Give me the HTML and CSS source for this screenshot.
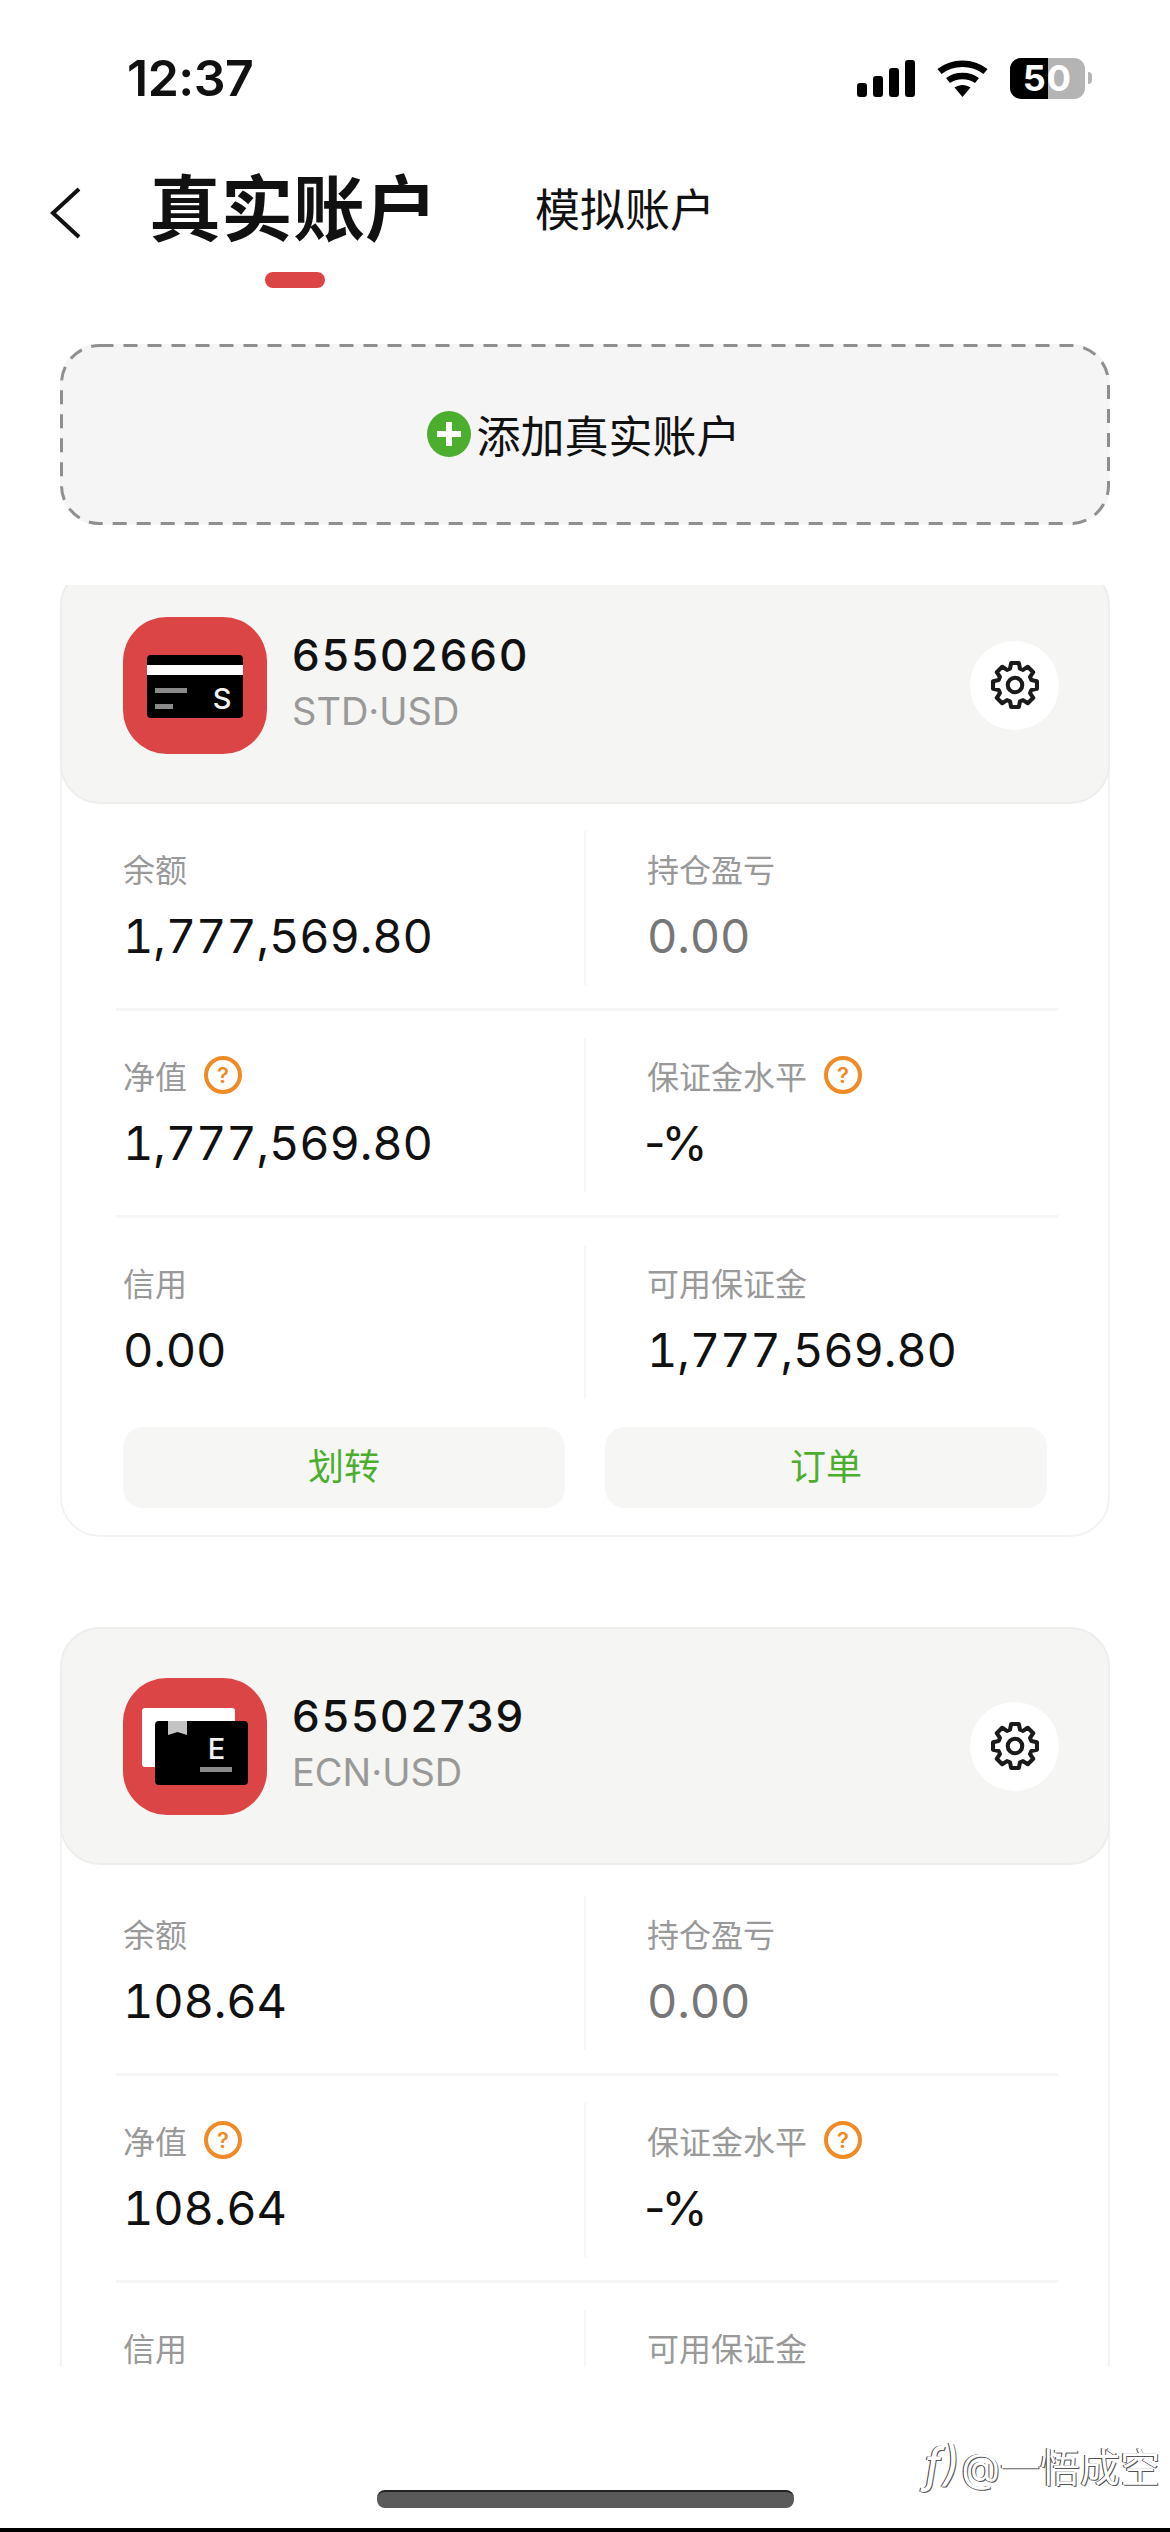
FILE: index.html
```html
<!DOCTYPE html>
<html lang="zh-CN">
<head>
  <meta charset="UTF-8" />
  <meta name="viewport" content="width=device-width, initial-scale=1" />
  <title>真实账户</title>
  <link rel="stylesheet" href="styles.css">
</head>
<body>
  <svg class="defs" width="0" height="0">
    <symbol id="gear" viewBox="-14 -14 28 28">
      <path d="M11.82 -2.08L11.82 2.08L8.8 2.69L8.12 4.32L9.83 6.88L6.88 9.83L4.32 8.12L2.69 8.8L2.08 11.82L-2.08 11.82L-2.69 8.8L-4.32 8.12L-6.88 9.83L-9.83 6.88L-8.12 4.32L-8.8 2.69L-11.82 2.08L-11.82 -2.08L-8.8 -2.69L-8.12 -4.32L-9.83 -6.88L-6.88 -9.83L-4.32 -8.12L-2.69 -8.8L-2.08 -11.82L2.08 -11.82L2.69 -8.8L4.32 -8.12L6.88 -9.83L9.83 -6.88L8.12 -4.32L8.8 -2.69Z" fill="none" stroke="#1a1a1a" stroke-width="2.2" stroke-linejoin="round"/>
      <circle r="3.9" fill="none" stroke="#1a1a1a" stroke-width="2.2"/>
    </symbol>
  </svg>

  <!-- Status bar -->
  <div class="status-bar">
    <span class="time">12:37</span>
    <div class="status-icons">
      <div class="signal">
        <i class="bar1"></i><i class="bar2"></i><i class="bar3"></i><i class="bar4"></i>
      </div>
      <svg class="wifi" width="51" height="37" viewBox="0 0 51 37">
        <path d="M2.5 11.5C15.5 1 35.5 1 48.5 11.5" fill="none" stroke="#000" stroke-width="6.5"/>
        <path d="M11 20.5C19 14.5 32 14.5 40 20.5" fill="none" stroke="#000" stroke-width="6.5"/>
        <path d="M17.5 27.5C22.5 24 28.5 24 33.5 27.5L25.5 37Z" fill="#000"/>
      </svg>
      <div class="battery"><span>50</span></div>
      <i class="battery-nub"></i>
    </div>
  </div>

  <!-- Tabs -->
  <div class="nav">
    <svg class="back" width="32" height="52" viewBox="0 0 32 52">
      <polyline points="29,2 3,26 29,50" fill="none" stroke="#111" stroke-width="4"/>
    </svg>
    <div class="tab-active">
      <div class="tab-title">真实账户</div>
      <div class="tab-line"></div>
    </div>
    <div class="tab">模拟账户</div>
  </div>

  <!-- Add account -->
  <div class="add-box">
    <svg class="add-dash" width="1050" height="181" viewBox="0 0 1050 181">
      <rect x="1.5" y="1.5" width="1047" height="178" rx="38" fill="none" stroke="#8f8f8f" stroke-width="3" stroke-dasharray="14 10"/>
    </svg>
    <svg class="add-plus" width="44" height="46" viewBox="0 0 44 46">
      <ellipse cx="22" cy="23" rx="22" ry="23" fill="#4cae2e"/>
      <path d="M22 11V35M10 23H34" stroke="#fff" stroke-width="6"/>
    </svg>
    <span class="add-text">添加真实账户</span>
  </div>

  <!-- Account list -->
  <div class="list">
    <div class="list-inner">
      <div class="card">
        <div class="card-head">
          <svg class="acc-icon" width="144" height="137" viewBox="0 0 144 137">
            <rect width="144" height="137" rx="44" fill="#db4545"/>
            <rect x="24" y="38" width="96" height="63" rx="4" fill="#000"/>
            <rect x="24" y="48" width="96" height="10" fill="#fff"/>
            <rect x="32" y="71" width="32" height="5" fill="#8a8a8a"/>
            <rect x="32" y="87" width="18" height="5" fill="#8a8a8a"/>
            <text x="99" y="92" class="icon-letter">S</text>
          </svg>
          <div class="acc-info">
            <div class="acc-no">65502660</div>
            <div class="acc-type">STD·USD</div>
          </div>
          <div class="gear-btn"><svg width="52" height="52"><use href="#gear"/></svg></div>
        </div>
        <div class="stats">
          <div class="stat-row">
            <div class="stat"><div class="stat-label">余额</div><div class="stat-value">1,777,569.80</div></div>
            <div class="stat"><div class="stat-label">持仓盈亏</div><div class="stat-value muted">0.00</div></div>
          </div>
          <div class="stat-row">
            <div class="stat"><div class="stat-label">净值<span class="help">?</span></div><div class="stat-value">1,777,569.80</div></div>
            <div class="stat"><div class="stat-label">保证金水平<span class="help">?</span></div><div class="stat-value pct">-%</div></div>
          </div>
          <div class="stat-row">
            <div class="stat"><div class="stat-label">信用</div><div class="stat-value">0.00</div></div>
            <div class="stat"><div class="stat-label">可用保证金</div><div class="stat-value">1,777,569.80</div></div>
          </div>
        </div>
        <div class="actions">
          <div class="action">划转</div>
          <div class="action">订单</div>
        </div>
      </div>

      <div class="card">
        <div class="card-head">
          <svg class="acc-icon" width="144" height="137" viewBox="0 0 144 137">
            <rect width="144" height="137" rx="44" fill="#db4545"/>
            <rect x="19" y="30" width="93" height="59" rx="3" fill="#fff"/>
            <rect x="32" y="43" width="93" height="64" rx="4" fill="#000"/>
            <path d="M45 43H64V57L54.5 54L45 57Z" fill="#c4c4c4"/>
            <text x="93.5" y="81" class="icon-letter">E</text>
            <rect x="77" y="89" width="32" height="5" fill="#8a8a8a"/>
          </svg>
          <div class="acc-info">
            <div class="acc-no">65502739</div>
            <div class="acc-type">ECN·USD</div>
          </div>
          <div class="gear-btn"><svg width="52" height="52"><use href="#gear"/></svg></div>
        </div>
        <div class="stats">
          <div class="stat-row">
            <div class="stat"><div class="stat-label">余额</div><div class="stat-value">108.64</div></div>
            <div class="stat"><div class="stat-label">持仓盈亏</div><div class="stat-value muted">0.00</div></div>
          </div>
          <div class="stat-row">
            <div class="stat"><div class="stat-label">净值<span class="help">?</span></div><div class="stat-value">108.64</div></div>
            <div class="stat"><div class="stat-label">保证金水平<span class="help">?</span></div><div class="stat-value pct">-%</div></div>
          </div>
          <div class="stat-row">
            <div class="stat"><div class="stat-label">信用</div></div>
            <div class="stat"><div class="stat-label">可用保证金</div></div>
          </div>
        </div>
      </div>
    </div>
  </div>

  <!-- Bottom -->
  <div class="footer">
    <div class="home-bar"></div>
  </div>
  <div class="bottom-strip"></div>
  <div class="watermark"><span class="wm-logo">ƒ)</span>@一悟成空</div>
</body>
</html>
```

FILE: styles.css
```css
/* Base */
* {
  box-sizing: border-box;
}

body {
  position: relative;
  margin: 0;
  width: 1170px;
  height: 2532px;
  overflow: hidden;
  background: #fff;
  color: #111;
  font-family: Inter, "Noto Sans CJK SC", sans-serif;
}

.defs {
  position: absolute;
}

/* Status bar */
.status-bar {
  display: flex;
  align-items: center;
  justify-content: space-between;
  height: 156px;
  padding: 0 78px 0 127px;
}

.time {
  font-size: 50px;
  font-weight: 600;
  letter-spacing: -0.5px;
}

.status-icons {
  display: flex;
  align-items: center;
}

.signal {
  display: flex;
  align-items: flex-end;
  gap: 6px;
  height: 37px;
  margin-right: 22px;
}

.signal i {
  display: block;
  width: 10px;
  background: #000;
  border-radius: 3px;
}

.signal .bar1 { height: 14px; }
.signal .bar2 { height: 21px; }
.signal .bar3 { height: 29px; }
.signal .bar4 { height: 37px; }

.wifi {
  margin-right: 22px;
}

.battery {
  display: flex;
  align-items: center;
  justify-content: center;
  width: 75px;
  height: 41px;
  border-radius: 11px;
  background: linear-gradient(to right, #000 0, #000 38px, #b4b4b4 38px);
}

.battery span {
  color: #fff;
  font-size: 36px;
  font-weight: 700;
  letter-spacing: 1px;
}

.battery-nub {
  display: block;
  width: 4px;
  height: 12px;
  margin-left: 3px;
  border-radius: 0 4px 4px 0;
  background: #b4b4b4;
}

/* Tabs */
.nav {
  display: flex;
  align-items: flex-start;
  height: 130px;
  padding: 3px 0 0 50px;
}

.back {
  margin: 28px 0 0 0;
}

.tab-active {
  display: flex;
  flex-direction: column;
  align-items: center;
  margin-left: 67px;
}

.tab-title {
  font-size: 72px;
  font-weight: 700;
  line-height: 100px;
}

.tab-line {
  width: 60px;
  height: 16px;
  margin: 13px 0 0 3px;
  border-radius: 8px;
  background: #db4545;
}

.tab {
  margin: 22px 0 0 98px;
  font-size: 45px;
  line-height: 60px;
}

/* Add account */
.add-box {
  position: relative;
  display: flex;
  align-items: center;
  justify-content: center;
  gap: 6px;
  height: 181px;
  margin: 58px 60px 0;
  padding: 0 3px 2px 0;
  border-radius: 38px;
  background: #f5f5f5;
  font-size: 44px;
}

.add-dash {
  position: absolute;
  top: 0;
  left: 0;
}

/* Account list */
.list {
  height: 1782px;
  margin-top: 60px;
  overflow: hidden;
}

.list-inner {
  margin-top: -19px;
}

.card {
  margin: 0 60px 90px;
  border: 2px solid #f3f3f3;
  border-radius: 40px;
}

.card-head {
  display: flex;
  align-items: center;
  height: 238px;
  margin: -2px -2px 0;
  padding: 0 49px 0 61px;
  border: 2px solid #eeeeec;
  border-radius: 40px;
  background: #f5f5f3;
}

.acc-icon {
  flex: none;
}

.icon-letter {
  fill: #f2f2f2;
  font-size: 29px;
  font-weight: 500;
  text-anchor: middle;
}

.acc-info {
  flex: 1;
  margin: -9px 0 0 25px;
}

.acc-no {
  font-size: 44px;
  font-weight: 500;
  line-height: 56px;
  letter-spacing: 2px;
}

.acc-type {
  margin-top: 4px;
  color: #999;
  font-size: 38px;
  line-height: 48px;
}

.gear-btn {
  display: flex;
  align-items: center;
  justify-content: center;
  width: 89px;
  height: 89px;
  border-radius: 50%;
  background: #fff;
}

/* Stats */
.stats {
  padding: 0 50px 0 54px;
}

.card + .card .stats {
  padding-top: 4px;
}

.stat-row {
  display: grid;
  grid-template-columns: 468px 1fr;
  padding: 27px 0 23px;
  border-bottom: 3px solid #f6f6f6;
}

.stat-row:last-child {
  border-bottom: 0;
  padding-bottom: 0;
}

.stat {
  height: 154px;
  padding: 15px 0 0 7px;
}

.stat + .stat {
  padding-left: 61px;
  border-left: 2px solid #f6f6f6;
}

.stat-label {
  display: flex;
  align-items: center;
  height: 44px;
  color: #999;
  font-size: 32px;
}

.stat-value {
  margin-top: 18px;
  font-size: 47px;
  font-variant-numeric: tabular-nums;
  line-height: 56px;
  letter-spacing: -0.2px;
}

.stat-value.muted {
  color: #777;
}

.stat-value.pct {
  margin-left: -3px;
  font-variant-numeric: normal;
  letter-spacing: -4px;
}

.help {
  display: flex;
  align-items: center;
  justify-content: center;
  width: 38px;
  height: 38px;
  margin-left: 17px;
  border: 4px solid #f08a24;
  border-radius: 50%;
  color: #f08a24;
  font-size: 22px;
  font-weight: 600;
}

/* Buttons */
.actions {
  display: grid;
  grid-template-columns: 1fr 1fr;
  gap: 40px;
  margin-top: 28px;
  padding: 0 61px 27px;
}

.action {
  height: 81px;
  border-radius: 20px;
  background: #f6f6f4;
  color: #4cae2e;
  font-size: 36px;
  line-height: 81px;
  text-align: center;
}

/* Bottom */
.footer {
  height: 161px;
  padding-top: 123px;
}

.home-bar {
  width: 417px;
  height: 18px;
  margin: 0 auto;
  border-top: 2px solid #222;
  border-radius: 8px;
  background: #5a5a5a;
}

.bottom-strip {
  height: 4px;
  background: #000;
}

/* Watermark lies over the page */
.watermark {
  position: absolute;
  right: 10px;
  top: 2437px;
  color: #fff;
  font-size: 40px;
  line-height: 56px;
  text-shadow: -1px 0 0 #333, 1px 1px 0 #555;
  white-space: nowrap;
}

.wm-logo {
  font-size: 48px;
  font-style: italic;
  margin-right: 2px;
}
```
